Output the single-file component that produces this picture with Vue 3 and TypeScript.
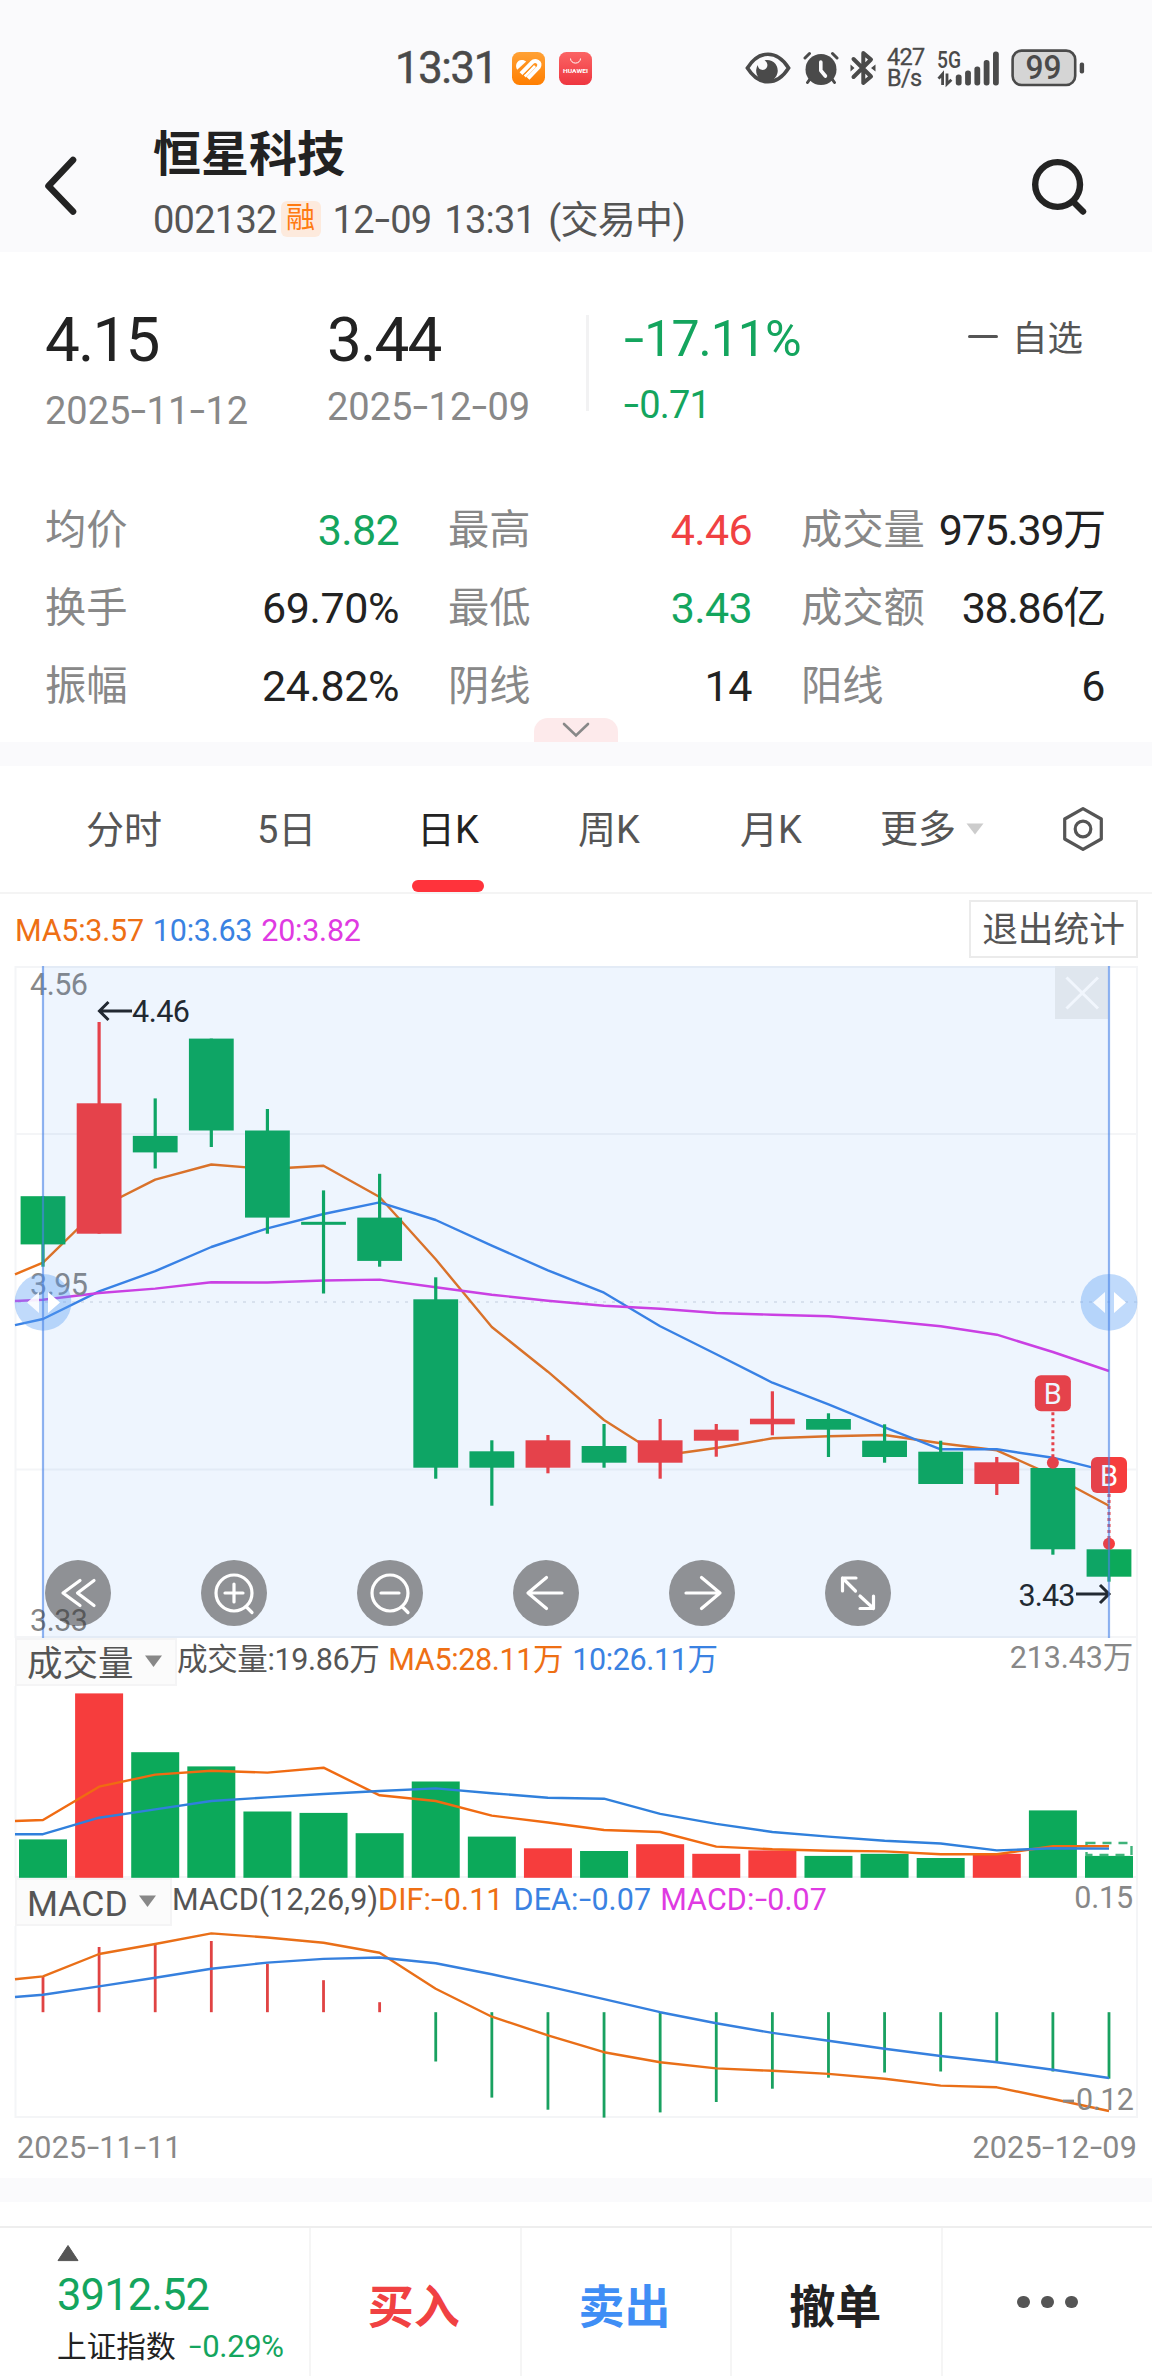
<script setup lang="ts">
import { h, type FunctionalComponent } from 'vue'

// Figures with a wide, raised minus/hyphen sign
const Num: FunctionalComponent<{ v: string }> = (props) =>
  h(
    'span',
    { class: 'num' },
    props.v.split(/(-)/).map((part) => (part === '-' ? h('i', { class: 'hy' }, '-') : part)),
  )
Num.props = ['v']

interface Stat { label: string; value: string; tone: string }
const stats: Stat[] = [
  { label: '均价', value: '3.82', tone: 'down' },
  { label: '最高', value: '4.46', tone: 'up' },
  { label: '成交量', value: '975.39万', tone: 'unit' },
  { label: '换手', value: '69.70%', tone: '' },
  { label: '最低', value: '3.43', tone: 'down' },
  { label: '成交额', value: '38.86亿', tone: 'unit' },
  { label: '振幅', value: '24.82%', tone: '' },
  { label: '阴线', value: '14', tone: '' },
  { label: '阳线', value: '6', tone: '' },
]

const RED = '#f63d3d'
const GREEN = '#0ca95a'
const cx = (i: number): number => 43 + i * 56.105

type Candle = [top: number, bottom: number, high: number, low: number, rising: 0 | 1]
const candles: Candle[] = [
  [1196.2, 1244.4, 1196.2, 1266.7, 0],
  [1103.3, 1233.7, 1022, 1233.7, 1],
  [1135.9, 1152.4, 1098.4, 1168.5, 0],
  [1038.6, 1130.5, 1038.6, 1147, 0],
  [1130.5, 1217.6, 1109, 1233.7, 0],
  [1221.8, 1224.8, 1190.4, 1293.5, 0],
  [1217.6, 1260.9, 1173.8, 1266.7, 0],
  [1299.3, 1467.7, 1277.3, 1478.7, 0],
  [1451.3, 1467.7, 1440.3, 1505.7, 0],
  [1440.3, 1467.7, 1435, 1473.3, 1],
  [1446, 1462.7, 1424, 1467.7, 0],
  [1440.3, 1462.7, 1419, 1478.7, 1],
  [1429.7, 1440.7, 1424, 1456.7, 1],
  [1418.7, 1424.3, 1391.3, 1435.3, 1],
  [1419, 1429.7, 1413.3, 1457, 0],
  [1440.7, 1457, 1424.3, 1462.7, 0],
  [1451.7, 1484, 1440.7, 1484, 0],
  [1462.3, 1484, 1457, 1495, 1],
  [1468, 1549.3, 1468, 1554.7, 0],
  [1549.3, 1576.7, 1549.3, 1581.7, 0],
]

// First value sits on the left frame, the others on the candle centres
const line = (ys: number[]): string =>
  ys.map((y, i) => `${i === 0 ? 15 : cx(i - 1).toFixed(1)},${y}`).join(' ')

const ma5 = line([1274.3, 1262.7, 1208, 1179.6, 1164.5, 1169, 1165.8, 1197, 1259.3, 1327, 1371.7, 1420, 1455.7, 1448, 1438.3, 1436.3, 1435, 1443.3, 1450.3, 1475.7, 1505.7])
const ma10 = line([1325.2, 1319, 1291.3, 1271.2, 1247, 1228.3, 1214, 1202.4, 1220, 1245.7, 1270.3, 1292.7, 1326.3, 1354.3, 1382.7, 1404.3, 1427.3, 1449.3, 1449.3, 1457.7, 1471.7])
const ma20 = line([1301, 1299.7, 1293, 1288.6, 1282.3, 1282.5, 1280.5, 1279.6, 1287.3, 1294.7, 1300.7, 1305.7, 1308.7, 1313, 1314.7, 1316.3, 1320.7, 1326.3, 1334.7, 1352, 1371])

const volumes: [number, 0 | 1][] = [
  [1839.4, 0], [1693.4, 1], [1752.2, 0], [1766.4, 0], [1811.5, 0], [1812.9, 0], [1833.2, 0],
  [1781.5, 0], [1836.6, 0], [1848.3, 1], [1851, 0], [1844.2, 1], [1853.8, 1], [1850.4, 1],
  [1855.9, 0], [1853.8, 0], [1858, 0], [1853.8, 1], [1810.4, 0], [1855.9, 0],
]
const vma5 = line([1821, 1820, 1786.7, 1774.6, 1770.8, 1772.6, 1767.7, 1795.3, 1801, 1815.6, 1822.5, 1830, 1832, 1846.6, 1849.3, 1850.7, 1851.4, 1854.2, 1854.2, 1846.3, 1846.3])
const vma10 = line([1834.2, 1834.2, 1817.7, 1809.4, 1801, 1797.4, 1794, 1791, 1788.4, 1793.2, 1797.7, 1798.7, 1813.9, 1823.9, 1832, 1836.6, 1840.7, 1843.5, 1850.4, 1848.3, 1848.6])

const ZERO = 2012.2
const hist = [1977, 1947, 1943.7, 1941, 1963.7, 1980.2, 2002.2, 2061.5, 2097.6, 2109.7, 2117.6, 2112.4, 2102, 2088.7, 2077.7, 2072.5, 2071.5, 2061.5, 2071.5, 2078.7]
const dif = line([1979.2, 1976.4, 1954, 1944, 1933.4, 1937.5, 1942.7, 1952.7, 1988.8, 2016.7, 2035.3, 2052.2, 2062.2, 2068.4, 2070.8, 2073.9, 2078.7, 2085.6, 2087.3, 2099, 2111])
const dea = line([1997, 1994.7, 1986.4, 1977.8, 1968.8, 1962.6, 1958.9, 1957.5, 1963.3, 1974.3, 1986.4, 1999.1, 2012.2, 2023.2, 2032.9, 2040.8, 2048.7, 2056, 2062.2, 2069.7, 2078])

const tools: string[] = [
  'M2 -12.5 L-15 0 L2 12.5 M16 -12.5 L-.5 0 L16 12.5',
  'M-18 0 a18 18 0 1 0 36 0 a18 18 0 1 0 -36 0 M12.5 14 L18 19.5 M-9 0 H9 M0 -9 V9',
  'M-18 0 a18 18 0 1 0 36 0 a18 18 0 1 0 -36 0 M12.5 14 L18 19.5 M-9 0 H9',
  'M16 0 H-18 M.5 -15.5 L-18 0 L.5 15.5',
  'M-16 0 H18 M-.5 -15.5 L18 0 L-.5 15.5',
  'M-2 -15 H-15.5 V-2 M-15.5 -15 L-2.5 -2 M2 15.5 H15.5 V3 M15.5 15.5 L2 3',
]
const markers = [
  { x: cx(18), y: 1375.3, dot: 1462.7 },
  { x: 1109, y: 1457, dot: 1543.7 },
]
</script>

<template>
  <div class="page">
    <header class="top">
      <div class="status">
        <span class="clock">13:31</span>
        <svg class="app1" width="33" height="33" viewBox="0 0 33 33">
          <defs>
            <linearGradient id="og" x1="0" y1="0" x2="0" y2="1"><stop offset="0" stop-color="#ffa135" /><stop offset="1" stop-color="#ff7e00" /></linearGradient>
            <linearGradient id="rg" x1="0" y1="0" x2="0" y2="1"><stop offset="0" stop-color="#fb6464" /><stop offset="1" stop-color="#ee3640" /></linearGradient>
          </defs>
          <rect width="33" height="33" rx="7.5" fill="url(#og)" />
          <path d="M5.2 17.8 C2.6 13.5 4.6 8.4 9.6 8 C11.6 7.9 13 8.6 14.2 9.6Z" fill="#fff" />
          <g fill="none" stroke="#fff" stroke-width="4">
            <path d="M9 21.6 L19.6 10.8 C23.5 7 29.4 10.4 26.6 15.4 L16 26.4" />
            <path d="M12.8 24.4 L23 13.9" stroke-width="2.8" />
          </g>
          <path d="M6.4 19.6 L16.4 9.4 M12.6 22 L21 13.2" fill="none" stroke="#ff9016" stroke-width="1" />
        </svg>
        <svg class="app2" width="33" height="33" viewBox="0 0 33 33">
          <rect width="33" height="33" rx="7.5" fill="url(#rg)" />
          <path d="M11.5 6.5 a5 4.6 0 0 0 10 0" fill="none" stroke="#fff" stroke-width="1" />
          <text x="4" y="21" font-size="6" font-weight="700" fill="#fff" textLength="25" lengthAdjust="spacingAndGlyphs">HUAWEI</text>
        </svg>
        <svg class="eye" width="46" height="32" viewBox="0 0 46 32">
          <path d="M2.4 16 C9 5.6 16 2.3 23 2.3 S37 5.6 43.6 16 C37 26.4 30 29.7 23 29.7 S9 26.4 2.4 16Z" fill="none" stroke="#4a4a4a" stroke-width="3.6" />
          <path d="M19.5 8.2 A10.8 10.8 0 1 1 12.8 13 C13 18 19 19.5 21.5 16 C23.5 13 22 9.8 19.5 8.2Z" fill="#4a4a4a" />
        </svg>
        <svg class="alarm" width="36" height="34" viewBox="0 0 36 34">
          <circle cx="18" cy="18.5" r="15.5" fill="#4a4a4a" />
          <g fill="none" stroke="#4a4a4a" stroke-linecap="round" stroke-width="3"><path d="M2 7 L6.5 2.5 M34 7 L29.5 2.5 M7 28 L4.5 31.5 M29 28 L31.5 31.5" /></g>
          <path d="M17.8 11 V19.5 L22.4 25" fill="none" stroke="#fafafc" stroke-width="3.6" stroke-linecap="round" stroke-linejoin="round" />
        </svg>
        <svg class="bt" width="26" height="36" viewBox="0 0 26 36">
          <path d="M3.5 9 L21 26.5 L13.3 33 V3 L21 9.5 L3.5 27" fill="none" stroke="#4a4a4a" stroke-width="4" stroke-linecap="round" stroke-linejoin="round" />
          <path d="M.5 14.5 L4.5 18 L.5 21.5Z M25.5 14.5 L21 18 L25.5 21.5Z" fill="#4a4a4a" />
        </svg>
        <span class="rate"><span>427</span><span>B/s</span></span>
        <svg class="signal" width="63" height="48" viewBox="0 -6 63 48">
          <text x="0" y="17.6" font-size="23" font-weight="500" fill="#4a4a4a" textLength="24" lengthAdjust="spacingAndGlyphs">5G</text>
          <g fill="#4a4a4a">
            <rect x="18.8" y="24.6" width="5.8" height="10.8" rx="2.7" /><rect x="28.1" y="20.6" width="5.8" height="14.8" rx="2.7" />
            <rect x="37.4" y="16.4" width="5.8" height="19" rx="2.7" /><rect x="46.7" y="10" width="5.8" height="25.4" rx="2.7" />
            <rect x="56" y="1.6" width="5.8" height="33.8" rx="2.7" />
          </g>
          <path d="M5.6 35 V24 L1.5 28.6 M10 23.5 V34 L14.4 29.8" fill="none" stroke="#4a4a4a" stroke-width="2.8" />
        </svg>
        <svg class="battery" width="74" height="38" viewBox="0 0 74 38">
          <rect x="1.6" y="1.6" width="62.6" height="34.4" rx="9" fill="#d5d5d5" stroke="#4a4a4a" stroke-width="2.6" />
          <rect x="68.7" y="13.5" width="4.4" height="11" rx="2" fill="#4a4a4a" />
          <text x="14.6" y="30.4" font-size="32.5" font-weight="500" fill="#4a4a4a" textLength="36" lengthAdjust="spacingAndGlyphs">99</text>
        </svg>
      </div>
      <div class="nav">
        <svg class="back" width="36" height="64" viewBox="0 0 36 64"><path d="M30 6 L5.5 32 L30 57.5" fill="none" stroke="#232323" stroke-width="6.6" stroke-linecap="round" stroke-linejoin="round" /></svg>
        <div class="titles">
          <h1>恒星科技</h1>
          <div class="sub">
            <Num v="002132" /><b class="badge">融</b><Num class="when" v="12-09 13:31 (交易中)" />
          </div>
        </div>
        <svg class="search" width="60" height="60" viewBox="0 0 60 60"><g fill="none" stroke="#232323" stroke-width="6.4" stroke-linecap="round"><circle cx="28.6" cy="28.5" r="22.4" /><path d="M45 46.5 L54 55.5" /></g></svg>
      </div>
    </header>

    <section class="summary">
      <div class="col c1"><Num class="big" v="4.15" /><Num class="date" v="2025-11-12" /></div>
      <div class="col c2"><Num class="big" v="3.44" /><Num class="date" v="2025-12-09" /></div>
      <div class="sep"></div>
      <div class="col c3 down"><Num class="pct" v="-17.11%" /><Num class="chg" v="-0.71" /></div>
      <div class="fav"><i></i><span>自选</span></div>
    </section>

    <section class="stats">
      <div v-for="s in stats" :key="s.label" class="stat">
        <span class="label">{{ s.label }}</span><span class="value" :class="s.tone">{{ s.value }}</span>
      </div>
    </section>
    <div class="pull"><div class="tab"><svg width="30" height="18" viewBox="0 0 30 18"><path d="M3 3 L15 14.5 L27 3" fill="none" stroke="#888" stroke-width="2.6" stroke-linecap="round" /></svg></div></div>
    <div class="gap"></div>

    <nav class="tabs">
      <span class="t1">分时</span><span class="t2">5日</span><span class="t3 on">日K</span><span class="t4">周K</span><span class="t5">月K</span>
      <span class="t6">更多<svg width="18" height="12" viewBox="0 0 18 12"><path d="M.5 .5 H17.5 L9 11.5Z" fill="#ccc" /></svg></span>
      <svg class="hex" width="44" height="48" viewBox="0 0 44 48"><g fill="none" stroke="#555" stroke-width="3.2"><path d="M22 3.6 L40.3 14 V34 L22 44.4 L3.7 34 V14Z" stroke-linejoin="round" /><circle cx="22" cy="24" r="7.8" /></g></svg>
    </nav>

    <div class="ma">
      <span class="o">MA5:3.57</span><span class="b">10:3.63</span><span class="p">20:3.82</span>
      <button>退出统计</button>
    </div>

    <svg class="pane" width="1152" height="672" viewBox="0 966 1152 672">
      <g fill="none" stroke="#f4f5f7" stroke-width="2">
        <path d="M15.5 1638 V967 H1137 V1638 M15.5 1134 H1137 M15.5 1469.5 H1137 M15.5 1637 H1137" />
        <path d="M18 1302 H1137" stroke="#e8eaee" stroke-dasharray="3 6" />
      </g>
      <g fill="none" stroke-width="2.4" stroke-linejoin="round">
        <polyline :points="ma5" stroke="#e9711a" /><polyline :points="ma10" stroke="#3a82e4" /><polyline :points="ma20" stroke="#d83be2" />
      </g>
      <g v-for="(c, i) in candles" :key="i" :fill="c[4] ? RED : GREEN">
        <rect :x="cx(i) - 1.6" :y="c[2]" width="3.2" :height="c[3] - c[2]" />
        <rect :x="cx(i) - 22.4" :y="c[0]" width="44.8" :height="c[1] - c[0]" />
      </g>
      <g v-for="m in markers" :key="m.y">
        <line :x1="m.x" :x2="m.x" :y1="m.y + 37" :y2="m.dot" :stroke="RED" stroke-width="3" stroke-dasharray="3 3" />
        <circle :cx="m.x" :cy="m.dot" r="6" :fill="RED" />
        <rect :x="m.x - 18" :y="m.y" width="36" height="36" rx="6" :fill="RED" />
        <text :x="m.x" :y="m.y + 28.6" text-anchor="middle" font-size="29" fill="#fff">B</text>
      </g>
      <g font-size="30.5" fill="#888">
        <text x="30" y="995" textLength="58">4.56</text>
        <text x="30" y="1295" textLength="58">3.95</text>
      </g>
      <g fill="#222" font-size="30.5">
        <text x="132" y="1021.6" textLength="58">4.46</text>
        <text x="1018.5" y="1605.7" textLength="57">3.43</text>
      </g>
      <path d="M132 1011 H100 M108.5 1002 L99.5 1011 L108.5 1020 M1076 1594 H1108 M1100 1585 L1109 1594 L1100 1603" fill="none" stroke="#222" stroke-width="3" />
      <rect x="43" y="966" width="1066" height="672" fill="#2a82f2" fill-opacity=".08" />
      <rect x="1055" y="966" width="53" height="53" fill="#dfe6ee" />
      <path d="M1066.5 977.5 L1098 1008.5 M1098 977.5 L1066.5 1008.5" stroke="#f1f6fd" stroke-width="3" />
      <g fill="#5a9ff5" fill-opacity=".38"><circle cx="43" cy="1302.3" r="28.4" /><circle cx="1109" cy="1302.3" r="28.4" /></g>
      <g fill="#fff">
        <path d="M39 1292 V1313 L27 1302.5Z M1105 1292 V1313 L1093 1302.5Z" fill-opacity=".88" />
        <path d="M48 1292 V1313 L60 1302.5Z M1114 1292 V1313 L1126 1302.5Z" />
      </g>
      <path d="M43 966 V1638 M1109 966 V1638" stroke="#4a84e6" stroke-opacity=".62" stroke-width="2.2" />
      <g v-for="(d, i) in tools" :key="d" :transform="`translate(${78 + i * 156} 1593)`">
        <circle r="33" fill="#8f9195" />
        <path :d="d" fill="none" stroke="#fff" stroke-width="3.2" stroke-linecap="round" stroke-linejoin="round" />
      </g>
      <text x="30" y="1631" font-size="30.5" fill="#333" fill-opacity=".62" textLength="58">3.33</text>
    </svg>

    <div class="phead vol">
      <div class="pick"><span>成交量</span><svg width="17" height="12" viewBox="0 0 17 12"><path d="M0 .4 H17 L8.5 12Z" fill="#888" /></svg></div>
      <span class="info g">成交量:19.86万</span><span class="info o">MA5:28.11万</span><span class="info b">10:26.11万</span>
      <span class="max">213.43万</span>
    </div>
    <svg class="pane" width="1152" height="192" viewBox="0 1686 1152 192">
      <path d="M15.5 1686 V1878 M1137 1686 V1878 M15.5 1877 H1137" stroke="#f4f5f7" stroke-width="2" />
      <rect v-for="(v, i) in volumes" :key="i" :x="cx(i) - 24" :y="v[0]" width="48" :height="1877.8 - v[0]" :fill="v[1] ? RED : GREEN" />
      <rect x="1086.5" y="1843" width="45" height="12" fill="none" stroke="#3fb37a" stroke-width="2.4" stroke-dasharray="9 7" />
      <g fill="none" stroke-width="2.4" stroke-linejoin="round"><polyline :points="vma5" stroke="#f06b12" /><polyline :points="vma10" stroke="#3080dc" /></g>
    </svg>

    <div class="phead macd">
      <div class="pick"><span>MACD</span><svg width="17" height="12" viewBox="0 0 17 12"><path d="M0 .4 H17 L8.5 12Z" fill="#888" /></svg></div>
      <span class="info g">MACD(12,26,9)</span><Num class="info o" v="DIF:-0.11" /><Num class="info b" v="DEA:-0.07" /><Num class="info p" v="MACD:-0.07" />
      <span class="max">0.15</span>
    </div>
    <svg class="pane" width="1152" height="192" viewBox="0 1926 1152 192">
      <path d="M15.5 1926 V2117 H1137 V1926" fill="none" stroke="#f4f5f7" stroke-width="2" />
      <rect v-for="(y, i) in hist" :key="i" :x="cx(i) - 1.4" :y="Math.min(y, ZERO)" width="2.8" :height="Math.abs(y - ZERO)" :fill="y < ZERO ? '#e04343' : '#19a160'" />
      <g fill="none" stroke-width="2.4" stroke-linejoin="round"><polyline :points="dif" stroke="#e96f18" /><polyline :points="dea" stroke="#3680de" /></g>
      <text x="1076" y="2110.4" font-size="30.5" fill="#888" textLength="58">0.12</text>
      <rect x="1063" y="2099.6" width="11" height="2.8" fill="#888" />
    </svg>
    <div class="range"><Num v="2025-11-11" /><Num v="2025-12-09" /></div>
    <div class="gap g2"></div>

    <footer class="bar">
      <div class="index">
        <svg width="22" height="18" viewBox="0 0 22 18"><path d="M11 1.5 L21 16.6 H1Z" fill="#555" stroke="#555" stroke-linejoin="round" /></svg>
        <span class="pts down">3912.52</span>
        <div class="idx"><span>上证指数</span><Num class="down" v="-0.29%" /></div>
      </div>
      <div class="act buy">买入</div><div class="act sell">卖出</div><div class="act">撤单</div>
      <div class="act more"><i></i><i></i><i></i></div>
    </footer>
  </div>
</template>

<style>
body { margin: 0; background: #fff; }
.num { white-space: pre; }
.hy { display: inline-block; font-style: normal; width: .276em; margin: 0 .075em; letter-spacing: 0; transform: translateY(-.02em) scaleX(1.45); }
</style>

<style scoped>
.page { width: 1152px; height: 2376px; overflow: hidden; background: #fff; display: flex; flex-direction: column; font-family: Roboto, "Noto Sans CJK SC", sans-serif; color: #222; letter-spacing: -.01em; }
.page > * { flex: none; }
svg { display: block; flex: none; }
svg text { letter-spacing: 0; }
.down { color: #14a55e; }
.up { color: #f04142; }
.o { color: #ee6f14; }
.b { color: #3a82e2; }
.p { color: #df3ae2; }
.g { color: #555; }

.top { height: 252px; background: #fafafc; }
.status { height: 112px; padding: 24px 0 0 395px; box-sizing: border-box; display: flex; align-items: center; color: #4a4a4a; }
.clock { width: 117px; font-size: 43.5px; font-weight: 400; letter-spacing: -.03em; line-height: 50px; padding-top: 2px; -webkit-text-stroke: .5px #4a4a4a; }
.app2 { margin-left: 14px; }
.eye { margin-left: 153px; }
.alarm { margin-left: 12px; }
.bt { margin-left: 11px; }
.rate { margin-left: 11px; width: 50px; display: flex; flex-direction: column; font-size: 23.5px; line-height: 21.5px; letter-spacing: -.03em; -webkit-text-stroke: .3px #4a4a4a; }
.battery { margin-left: 11px; }
.nav { height: 140px; display: flex; align-items: flex-start; }
.back { margin: 42px 0 0 43px; }
.titles { margin-left: 74px; width: 876px; }
h1 { margin: 14px 0 0; font-size: 48px; font-weight: 700; line-height: 58px; letter-spacing: 0; }
.sub { margin-top: 10px; height: 52px; display: flex; align-items: center; font-size: 38px; line-height: 52px; color: #555; letter-spacing: -.02em; }
.badge { width: 40px; height: 36px; margin-left: 4px; margin-top: -3px; border-radius: 6px; background: #fdeadd; color: #ff7a12; font-size: 29px; font-weight: 400; line-height: 34px; text-align: center; letter-spacing: 0; }
.when { margin-left: 12px; letter-spacing: -.018em; word-spacing: 4px; }
.search { margin-top: 44px; }

.summary { height: 239px; display: flex; align-items: flex-start; padding-left: 45px; }
.col { display: flex; flex-direction: column; }
.c1, .c2 { width: 282px; }
.c2 { width: 259px; }
.big { font-size: 62px; line-height: 70px; margin-top: 53px; letter-spacing: -.03em; }
.date { font-size: 38px; line-height: 46px; margin-top: 13px; color: #888; letter-spacing: 0; }
.c2 .date { margin-top: 9px; }
.sep { width: 3px; height: 96px; margin-top: 63px; background: #f2f2f3; }
.c3 { width: 342px; margin-left: 34px; }
.pct { font-size: 50px; line-height: 60px; margin-top: 57px; letter-spacing: -.02em; }
.chg { font-size: 38px; line-height: 46px; margin-top: 13px; letter-spacing: -.02em; }
.fav { display: flex; align-items: center; margin-top: 60px; height: 46px; font-size: 35.5px; color: #555; letter-spacing: 0; }
.fav i { width: 30px; height: 3px; margin: 2px 14px 0 3px; background: #555; border-radius: 2px; }

.stats { height: 227px; padding: 0 46px 0 45px; display: grid; grid-template-columns: 354px 304px 304px; column-gap: 49px; grid-auto-rows: 78px; align-content: start; }
.stat { display: flex; justify-content: space-between; height: 78px; line-height: 78px; white-space: nowrap; }
.label { font-size: 41.3px; color: #888; letter-spacing: 0; }
.value { font-size: 43px; letter-spacing: -.01em; }
.value.up, .value.down { letter-spacing: -.015em; }
.value.unit { letter-spacing: -.03em; }
.pull { height: 24px; display: flex; justify-content: center; }
.tab { width: 84px; height: 24px; border-radius: 14px 14px 0 0; background: #fdeaeb; display: flex; justify-content: center; padding-top: 3px; box-sizing: border-box; }
.gap { height: 24px; background: #fafafc; }

.tabs { height: 128px; box-sizing: border-box; border-bottom: 2px solid #f4f4f4; display: flex; align-items: center; font-size: 38px; color: #555; padding-left: 86px; letter-spacing: 0; }
.tabs span { height: 126px; line-height: 128px; white-space: nowrap; }
.t1 { width: 171px; } .t2 { width: 160px; } .t3 { width: 161px; } .t4 { width: 162px; } .t5 { width: 140px; }
.t6 { display: flex; align-items: center; gap: 10px; width: 181px; }
.on { color: #222; display: flex; flex-direction: column; }
.on::after { content: ""; flex: none; width: 72px; height: 12px; margin: -14px 0 0 -5px; border-radius: 6px; background: #ff333b; }

.ma { height: 72px; display: flex; align-items: center; padding: 0 14px 0 15px; font-size: 30.5px; letter-spacing: -.008em; }
.ma .b { margin-left: 9px; }
.ma .p { margin-left: 9px; }
button { margin-left: auto; width: 169px; height: 58px; margin-top: -2px; padding: 2px 0 0; border: 2px solid #ebebeb; background: #fff; font: 35.7px/50px Roboto, "Noto Sans CJK SC", sans-serif; color: #555; }

.phead { height: 48px; box-sizing: border-box; display: flex; align-items: flex-start; font-size: 30.5px; line-height: 44px; margin: 0 14px 0 15px; border-right: 2px solid #f4f5f7; padding-right: 3px; white-space: nowrap; }
.pick { box-sizing: border-box; width: 162px; height: 48px; background: #fbfbfb; border: 2px solid #f4f4f5; display: flex; align-items: center; gap: 11px; padding: 3px 0 0 10px; font-size: 35.5px; color: #555; letter-spacing: 0; }
.pick svg { margin-top: -6px; }
.macd .pick { width: 157px; padding-left: 10px; }
.macd .info { letter-spacing: .002em; }
.vol .info { letter-spacing: -.012em; }
.vol .o { margin-left: 9px; }
.vol .b { margin-left: 9px; }
.macd .b { margin-left: 10px; }
.macd .p { margin-left: 9px; }
.max { margin-left: auto; color: #888; line-height: 40px; }
.range { height: 60px; display: flex; justify-content: space-between; padding: 0 15px 0 17px; font-size: 30.5px; line-height: 60px; color: #888; letter-spacing: .006em; }
.g2 { height: 24px; margin-bottom: 24px; }

.bar { height: 150px; box-sizing: border-box; border-top: 2px solid #eee; display: flex; }
.index { width: 309px; padding: 16px 0 0 57px; box-sizing: border-box; display: flex; flex-direction: column; }
.pts { font-size: 43.5px; line-height: 50px; margin-top: 9px; letter-spacing: -.02em; white-space: nowrap; }
.idx { display: flex; font-size: 31px; line-height: 40px; margin-top: 6px; letter-spacing: -.01em; white-space: nowrap; }
.idx > span:first-child { font-size: 29.7px; letter-spacing: 0; width: 132px; }
.act { width: 211px; box-sizing: border-box; border-left: 2px solid #f5f5f5; font-size: 46px; font-weight: 700; line-height: 159px; text-align: center; letter-spacing: 0; padding-right: 3px; }
.buy { color: #f04142; }
.sell { color: #3f8ef5; }
.more { display: flex; justify-content: center; align-items: center; gap: 11.5px; padding-right: 0; }
.more i { width: 12.6px; height: 12.6px; border-radius: 50%; background: #555; }
</style>
